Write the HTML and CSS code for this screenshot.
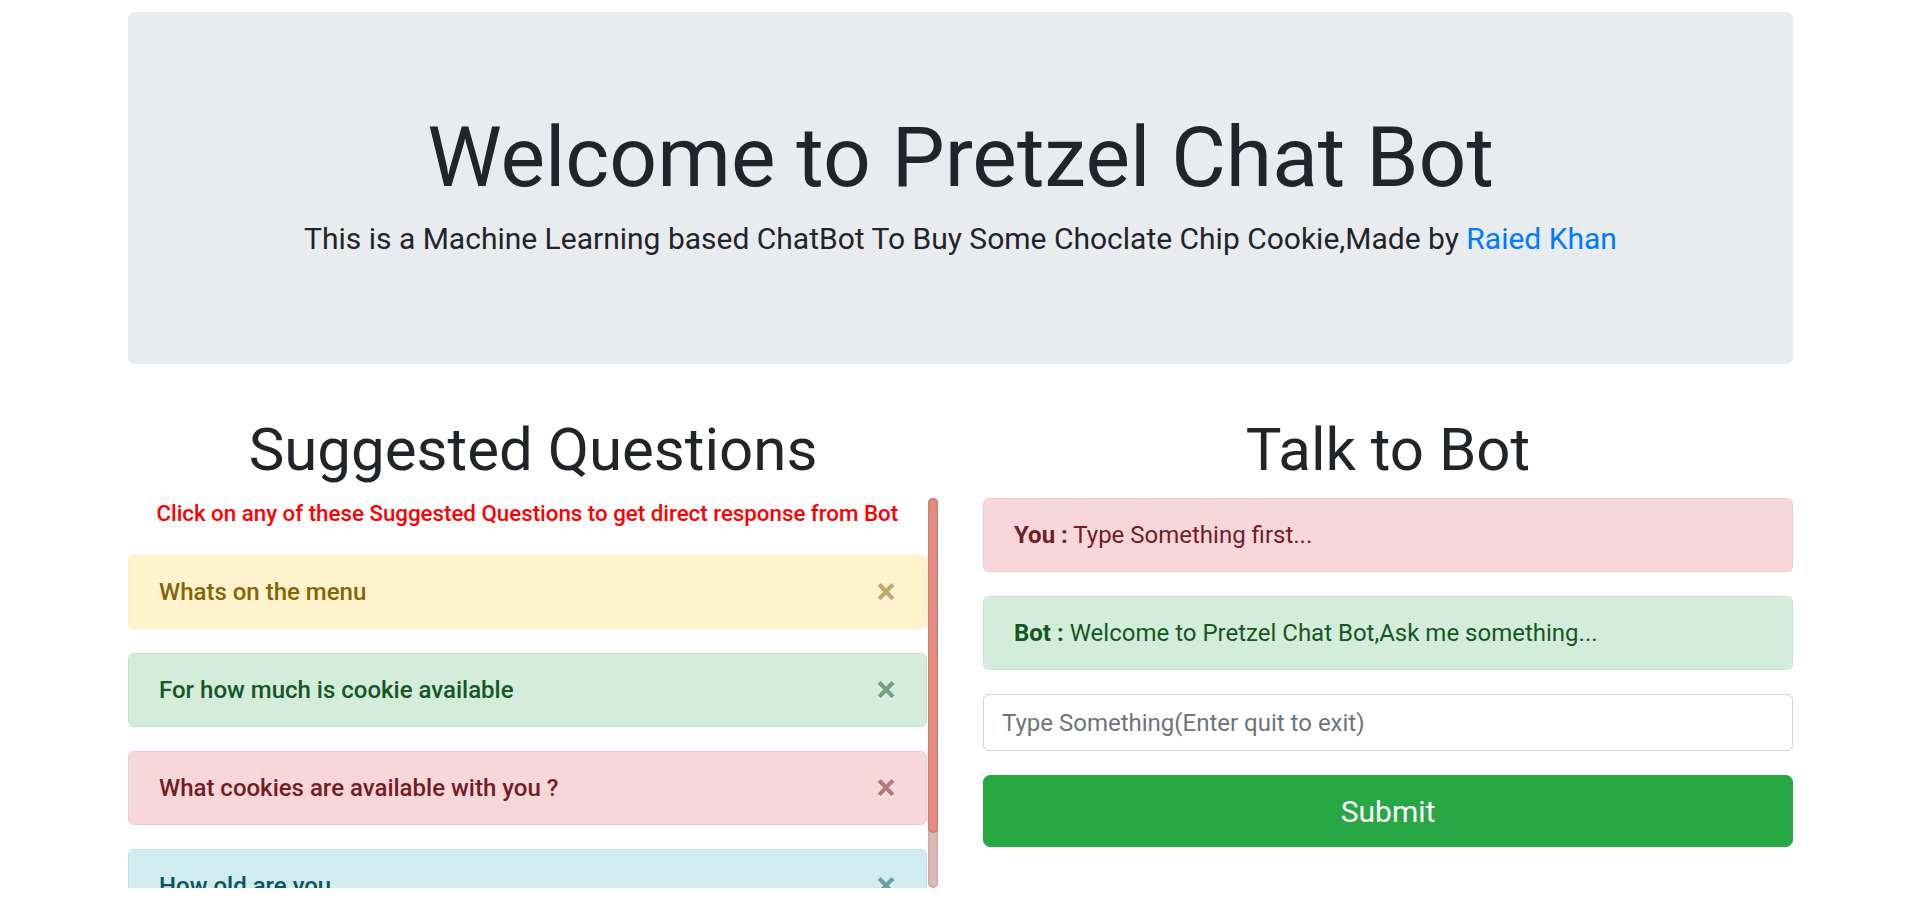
FILE: index.html
```html
<!DOCTYPE html>
<html lang="en">
<head>
<meta charset="utf-8">
<title>Pretzel Chat Bot</title>
<link rel="stylesheet" href="styles.css">
</head>
<body>
<div class="container">
  <div class="jumbotron">
    <h1 class="display">Welcome to Pretzel Chat Bot</h1>
    <p class="lead">This is a Machine Learning based ChatBot To Buy Some Choclate Chip Cookie,Made by <a href="#">Raied Khan</a></p>
  </div>
  <div class="row">
    <div class="col">
      <h1 class="col-title">Suggested Questions</h1>
      <div class="suggest-box">
        <div class="suggest">
          <p class="hint">Click on any of these Suggested Questions to get direct response from Bot</p>
          <div class="alert alert-warning q">Whats on the menu<button class="close" type="button">&times;</button></div>
          <div class="alert alert-success q">For how much is cookie available<button class="close" type="button">&times;</button></div>
          <div class="alert alert-danger q">What cookies are available with you ?<button class="close" type="button">&times;</button></div>
          <div class="alert alert-info q">How old are you<button class="close" type="button">&times;</button></div>
        </div>
        <div class="scrollbar"><div class="thumb"></div></div>
      </div>
    </div>
    <div class="col">
      <h1 class="col-title">Talk to Bot</h1>
      <div class="alert alert-danger"><strong>You :</strong> Type Something first...</div>
      <div class="alert alert-success"><strong>Bot :</strong> Welcome to Pretzel Chat Bot,Ask me something...</div>
      <form class="chat-form">
        <input class="form-control" type="text" placeholder="Type Something(Enter quit to exit)">
        <button class="btn-submit" type="button">Submit</button>
      </form>
    </div>
  </div>
</div>
</body>
</html>
```

FILE: styles.css
```css
* { box-sizing: border-box; }
html, body { margin: 0; padding: 0; }
body {
  font-family: Roboto, "Noto Sans", "Liberation Sans", sans-serif;
  font-size: 24px;
  line-height: 36px;
  color: #212529;
  background: #fff;
  padding-left: 2px;
}
.container {
  width: 1665px;
  margin: 12px auto 0;
}
.jumbotron {
  background: #e9ecef;
  border-radius: 7px;
  padding: 96px 48px 103.5px;
  margin-bottom: 50px;
  text-align: center;
}
.display {
  font-size: 84px;
  line-height: 100.8px;
  font-weight: 400;
  margin: 0 0 7px;
}
.lead {
  font-size: 30px;
  line-height: 45px;
  font-weight: 400;
  margin: 0;
}
.lead a { color: #007bff; text-decoration: none; }
.row {
  display: grid;
  grid-template-columns: 810px 810px;
  column-gap: 45px;
}
.col-title {
  font-size: 60px;
  line-height: 72px;
  font-weight: 400;
  text-align: center;
  margin: 0 0 12px;
}
.suggest-box {
  display: flex;
  height: 390px;
}
.suggest {
  flex: 1;
  min-width: 0;
  overflow: hidden;
}
.scrollbar {
  width: 10.5px;
  height: 100%;
  margin-left: 1px;
  background: #dcbcb8;
  border-radius: 6px;
  box-shadow: inset 0 0 3px rgba(120, 60, 50, 0.4);
}
.thumb {
  height: 335px;
  background: #e38d83;
  border-radius: 6px;
  box-shadow: inset 0 0 3px rgba(170, 60, 50, 0.6);
}
.hint {
  color: #ff0000;
  font-size: 22.3px;
  line-height: 31.5px;
  font-weight: 500;
  text-align: center;
  margin: 0 0 25.5px;
}
.alert {
  position: relative;
  padding: 18px 30px;
  border: 1.5px solid transparent;
  border-radius: 6px;
  margin-bottom: 24px;
}
.q { font-weight: 500; padding-right: 96px; }
.alert strong { font-weight: 700; }
.alert-warning { color: #856404; background: #fff3cd; border-color: #ffeeba; }
.alert-success { color: #155724; background: #d4edda; border-color: #c3e6cb; }
.alert-danger { color: #721c24; background: #f8d7da; border-color: #f5c6cb; }
.alert-info { color: #0c5460; background: #d1ecf1; border-color: #bee5eb; }
.close {
  position: absolute;
  top: 0;
  right: 0;
  padding: 18px 30px;
  background: transparent;
  border: 0;
  font-family: inherit;
  font-size: 36px;
  line-height: 36px;
  font-weight: 700;
  color: inherit;
  text-shadow: 0 1.5px 0 #fff;
  opacity: 0.5;
  cursor: pointer;
}
.chat-form { margin: 0; }
.form-control {
  display: block;
  width: 100%;
  height: 57px;
  padding: 9px 18px;
  font-family: inherit;
  font-size: 24px;
  line-height: 36px;
  color: #495057;
  background: #fff;
  border: 1.5px solid #ced4da;
  border-radius: 6px;
  margin-bottom: 24px;
  outline: none;
}
.form-control::placeholder { color: #6c757d; opacity: 1; }
.btn-submit {
  display: block;
  width: 100%;
  height: 72px;
  padding: 12px 24px;
  font-family: inherit;
  font-size: 30px;
  line-height: 45px;
  font-weight: 400;
  color: #fff;
  background: #28a745;
  border: 1.5px solid #28a745;
  border-radius: 7px;
  cursor: pointer;
}
```
